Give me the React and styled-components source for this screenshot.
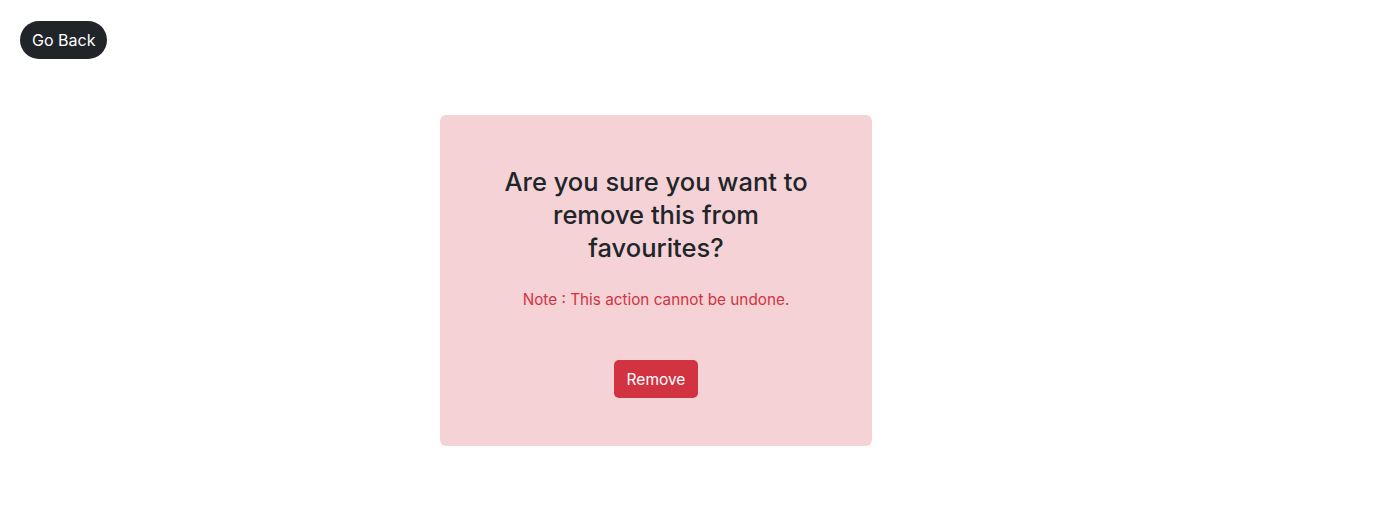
import React from 'react';
import styled, { createGlobalStyle } from 'styled-components';

const GlobalStyle = createGlobalStyle`
  body {
    margin: 0;
    background: #fff;
    font-family: Inter, "Noto Sans", "Liberation Sans", sans-serif;
    color: #212529;
  }
`;

const Page = styled.div`
  padding: 21px 20px;
`;

const BackButton = styled.button`
  height: 38px;
  padding: 0 12px;
  border: none;
  border-radius: 19px;
  background: #212529;
  color: #fff;
  font-family: inherit;
  font-size: 16px;
  cursor: pointer;
`;

const Row = styled.div`
  display: flex;
  padding-left: 420px;
  margin-top: 56px;
`;

const Card = styled.div`
  width: 432px;
  box-sizing: border-box;
  padding: 50px 48px 48px;
  background: #f4d2d6;
  border-radius: 6px;
  text-align: center;
`;

const Title = styled.h3`
  margin: 0 0 24px;
  font-size: 25.5px;
  font-weight: 500;
  line-height: 33px;
  color: #212529;
`;

const Note = styled.p`
  margin: 0 0 48px;
  font-size: 15.3px;
  line-height: 24px;
  color: #d13440;
`;

const RemoveButton = styled.button`
  height: 38px;
  padding: 0 13px;
  border: none;
  border-radius: 5px;
  background: #d13440;
  color: #fff;
  font-family: inherit;
  font-size: 15.5px;
  cursor: pointer;
`;

export default function App() {
  return (
    <Page>
      <GlobalStyle />
      <BackButton>Go Back</BackButton>
      <Row>
        <Card>
          <Title>
            Are you sure you want to
            <br />
            remove this from
            <br />
            favourites?
          </Title>
          <Note>Note : This action cannot be undone.</Note>
          <RemoveButton>Remove</RemoveButton>
        </Card>
      </Row>
    </Page>
  );
}
